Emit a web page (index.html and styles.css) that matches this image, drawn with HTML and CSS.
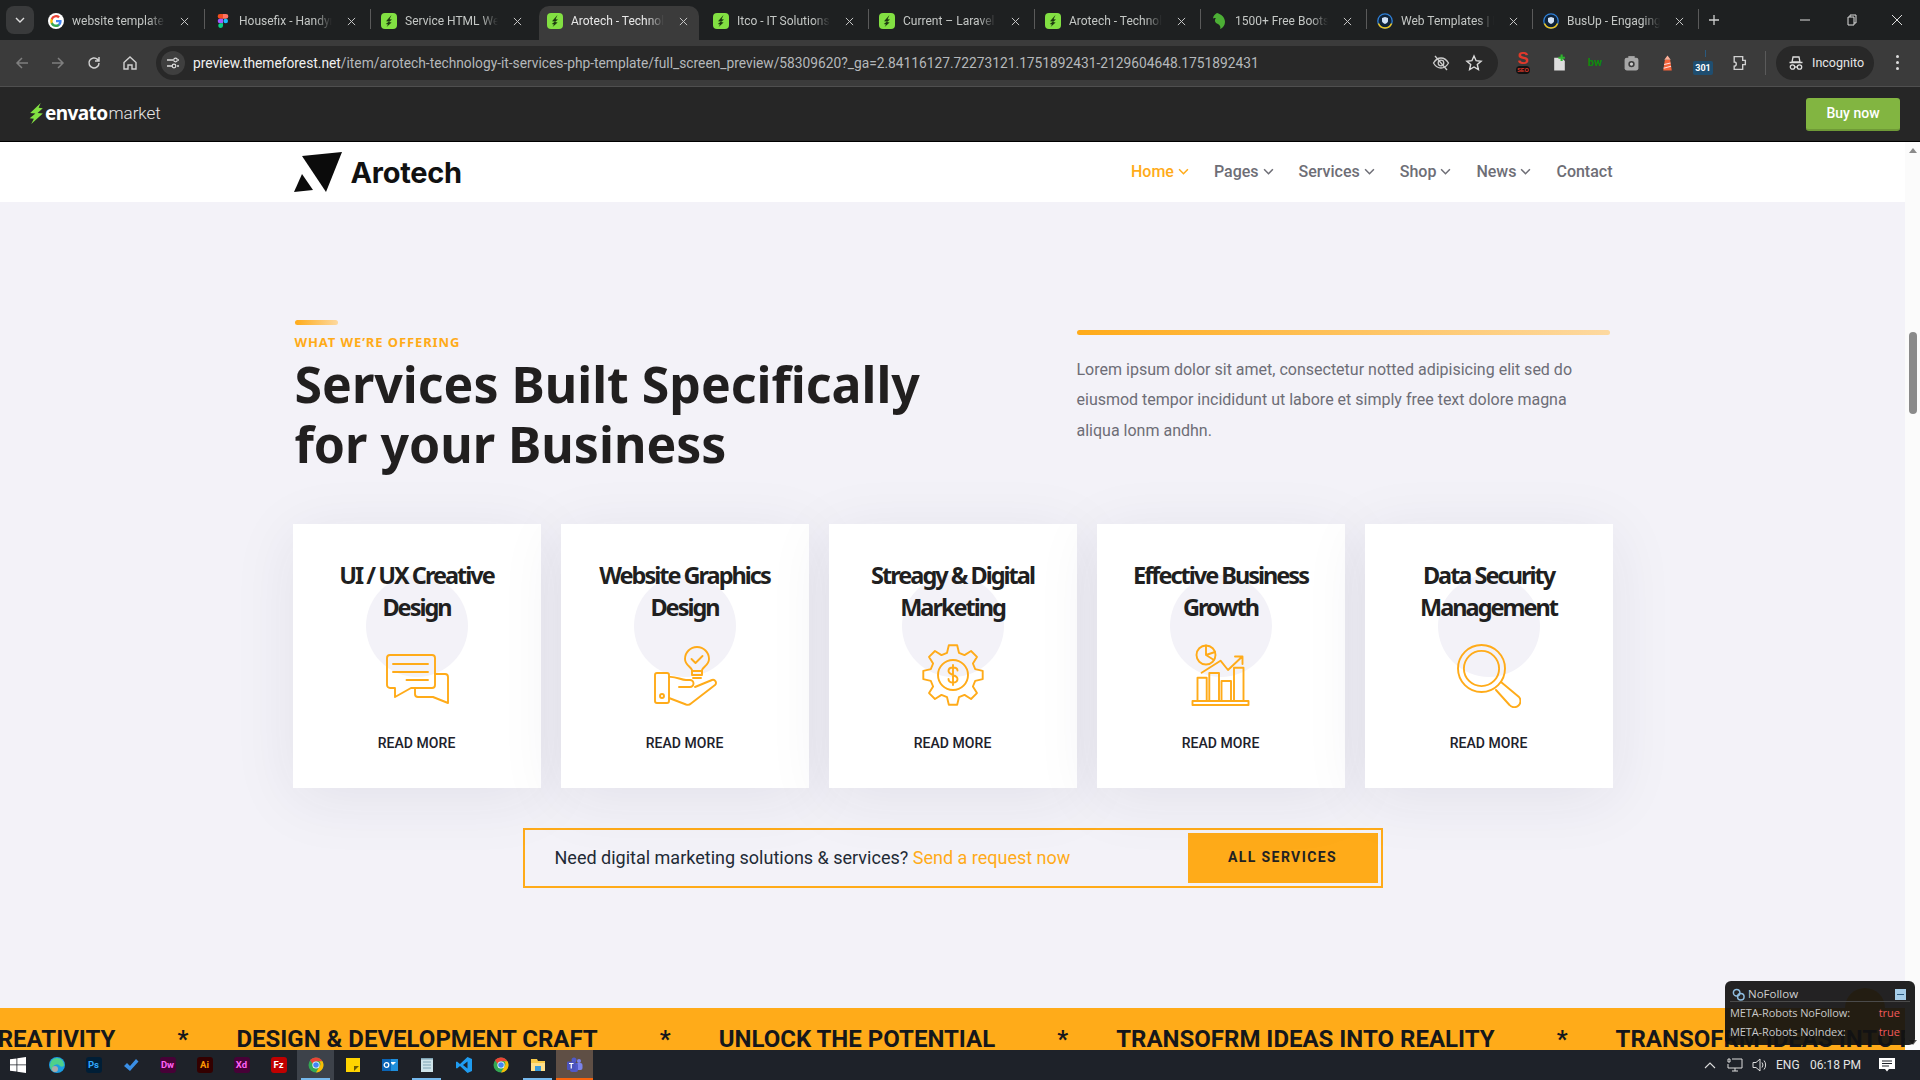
FILE: index.html
```html
<!DOCTYPE html>
<html lang="en">
<head>
<meta charset="utf-8">
<title>Arotech - Technology</title>
<link rel="stylesheet" href="styles.css">
</head>
<body>
<svg class="defs" width="0" height="0" aria-hidden="true">
  <symbol id="envato" viewBox="0 0 16 16"><rect width="16" height="16" rx="4" fill="#82e042"/><path d="M10.5 2 5 8.2l3 .3-3.2 2.6 2.2.3L5.6 14l5-4.6-2.6-.4 3-2.4-2.4-.3z" fill="#1d3a10"/></symbol>
  <symbol id="google" viewBox="0 0 16 16"><circle cx="8" cy="8" r="8" fill="#fff"/><path d="M13.6 8.2c0-.4 0-.8-.1-1.2H8v2.2h3.1a2.7 2.7 0 0 1-1.2 1.8v1.5h1.9c1.1-1 1.8-2.5 1.8-4.3z" fill="#4285f4"/><path d="M8 14c1.6 0 2.9-.5 3.8-1.5l-1.9-1.5c-.5.4-1.2.6-1.9.6-1.5 0-2.8-1-3.2-2.4h-2v1.5A5.9 5.9 0 0 0 8 14z" fill="#34a853"/><path d="M4.8 9.2a3.500 3.500 0 0 1 0-2.300V5.400h-2a6 6 0 0 0 0 5.300z" fill="#fbbc05"/><path d="M8 4.300c.9 0 1.600.3 2.200.9l1.700-1.700A5.900 5.900 0 0 0 2.800 5.400l2 1.500C5.200 5.400 6.500 4.300 8 4.300z" fill="#ea4335"/></symbol>
  <symbol id="figma" viewBox="0 0 16 16"><path d="M5 1h3v4.700H5a2.300 2.300 0 0 1 0-4.700z" fill="#f24e1e"/><path d="M8 1h3a2.300 2.300 0 0 1 0 4.700H8z" fill="#ff7262"/><path d="M5 5.700h3v4.600H5a2.300 2.300 0 0 1 0-4.600z" fill="#a259ff"/><circle cx="10.700" cy="8" r="2.300" fill="#1abcfe"/><path d="M5 10.300h3V13a2.400 2.400 0 1 1-3-2.700z" fill="#0acf83"/></symbol>
  <symbol id="leaf" viewBox="0 0 16 16"><path d="M6 0c4 1 8 4 8 9 0 3-2 6-5 7 1-2 0-4-2-5-3-1-4-4-2-6-1 0-2 0-3 .5C2 3 4 1 6 0z" fill="#4caf35"/></symbol>
  <symbol id="shield" viewBox="0 0 16 16"><circle cx="8" cy="8" r="7.200" fill="#0e2238" stroke="#2f7fd6" stroke-width="1.300"/><path d="M1.500 10.500a7 7 0 0 0 13 0" fill="none" stroke="#f0c419" stroke-width="1.500"/><path d="M8 4l3 1v3c0 2-3 3-3 3S5 10 5 8V5z" fill="#cfe0f5"/></symbol>
  <symbol id="x" viewBox="0 0 10 10"><path d="M1 1l8 8M9 1l-8 8" stroke="#c7c7c7" stroke-width="1.100" fill="none"/></symbol>
  <symbol id="chev" viewBox="0 0 10 6"><path d="M1 1l4 4 4-4" fill="none" stroke="currentColor" stroke-width="1.400"/></symbol>
  <symbol id="chrome" viewBox="0 0 16 16"><circle cx="8" cy="8" r="7.500" fill="#34a853"/><path d="M8 .5a7.500 7.500 0 0 1 6.500 3.800H8a3.700 3.700 0 0 0-3.500 2.500L2 3A7.500 7.500 0 0 1 8 .5z" fill="#ea4335"/><path d="M14.500 4.300A7.500 7.500 0 0 1 8 15.500l3.200-5.600a3.700 3.700 0 0 0 0-5.600z" fill="#fbbc05"/><circle cx="8" cy="8" r="3.600" fill="#fff"/><circle cx="8" cy="8" r="2.800" fill="#4285f4"/></symbol>
</svg>

<div class="tabstrip">
  <div class="tab-menu"><svg class="chev-s"><use href="#chev"/></svg></div>
  <div class="tabs">
    <div class="tab"><svg class="fav"><use href="#google"/></svg><span class="tab-title">website template -</span><svg class="tab-x"><use href="#x"/></svg></div>
    <div class="tab"><svg class="fav"><use href="#figma"/></svg><span class="tab-title">Housefix - Handym</span><svg class="tab-x"><use href="#x"/></svg></div>
    <div class="tab tab-nosep"><svg class="fav"><use href="#envato"/></svg><span class="tab-title">Service HTML Web</span><svg class="tab-x"><use href="#x"/></svg></div>
    <div class="tab tab-active tab-nosep"><svg class="fav"><use href="#envato"/></svg><span class="tab-title">Arotech - Technol</span><svg class="tab-x"><use href="#x"/></svg></div>
    <div class="tab"><svg class="fav"><use href="#envato"/></svg><span class="tab-title">Itco - IT Solutions</span><svg class="tab-x"><use href="#x"/></svg></div>
    <div class="tab"><svg class="fav"><use href="#envato"/></svg><span class="tab-title">Current – Laravel E</span><svg class="tab-x"><use href="#x"/></svg></div>
    <div class="tab"><svg class="fav"><use href="#envato"/></svg><span class="tab-title">Arotech - Technol</span><svg class="tab-x"><use href="#x"/></svg></div>
    <div class="tab"><svg class="fav"><use href="#leaf"/></svg><span class="tab-title">1500+ Free Bootst</span><svg class="tab-x"><use href="#x"/></svg></div>
    <div class="tab"><svg class="fav"><use href="#shield"/></svg><span class="tab-title">Web Templates | H</span><svg class="tab-x"><use href="#x"/></svg></div>
    <div class="tab"><svg class="fav"><use href="#shield"/></svg><span class="tab-title">BusUp - Engaging</span><svg class="tab-x"><use href="#x"/></svg></div>
  </div>
  <svg class="plus" viewBox="0 0 12 12"><path d="M6 1v10M1 6h10" stroke="#d0d0d0" stroke-width="1.300"/></svg>
  <div class="winctl">
    <svg viewBox="0 0 12 12"><path d="M1 6h10" stroke="#ddd"/></svg>
    <svg viewBox="0 0 12 12"><path d="M4 3V1h6v8H8M2 3h6v8H2z" fill="none" stroke="#ddd"/></svg>
    <svg viewBox="0 0 12 12"><path d="M1 1l10 10M11 1L1 11" stroke="#ddd" fill="none"/></svg>
  </div>
</div>

<div class="toolbar">
  <div class="tool"><svg viewBox="0 0 16 16"><path d="M14 8H3M8 3 3 8l5 5" fill="none" stroke="#7f7f7f" stroke-width="1.500"/></svg></div>
  <div class="tool"><svg viewBox="0 0 16 16"><path d="M2 8h11M8 3l5 5-5 5" fill="none" stroke="#7f7f7f" stroke-width="1.500"/></svg></div>
  <div class="tool"><svg viewBox="0 0 16 16"><path d="M13 8a5 5 0 1 1-1.500-3.600L13 6M13 2v4H9" fill="none" stroke="#d0d0d0" stroke-width="1.500"/></svg></div>
  <div class="tool"><svg viewBox="0 0 16 16"><path d="M2 7.500 8 2l6 5.500V14h-4v-4H6v4H2z" fill="none" stroke="#d0d0d0" stroke-width="1.400"/></svg></div>
  <div class="omnibox">
    <div class="site-btn"><svg viewBox="0 0 14 14"><path d="M1 4h6M11 10h2M1 10h5M12 4h1" stroke="#ddd" stroke-width="1.300"/><circle cx="9.500" cy="4" r="1.800" fill="none" stroke="#ddd" stroke-width="1.200"/><circle cx="8" cy="10" r="1.800" fill="none" stroke="#ddd" stroke-width="1.200"/></svg></div>
    <div class="url"><b>preview.themeforest.net</b>/item/arotech-technology-it-services-php-template/full_screen_preview/58309620?_ga=2.84116127.72273121.1751892431-2129604648.1751892431</div>
    <svg class="omni-ic" viewBox="0 0 18 18"><path d="M1.500 9S4.500 4 9 4s7.500 5 7.500 5-3 5-7.500 5-7.500-5-7.500-5z" fill="none" stroke="#ccc" stroke-width="1.300"/><circle cx="9" cy="9" r="2.800" fill="none" stroke="#ccc" stroke-width="1.300"/><path d="M3 2l12 14" stroke="#ccc" stroke-width="1.300"/></svg>
    <svg class="omni-ic star" viewBox="0 0 18 18"><path d="m9 2 2.100 4.700 5 .5-3.800 3.300 1.100 5L9 13l-4.400 2.500 1.100-5L1.900 7.200l5-.5z" fill="none" stroke="#ddd" stroke-width="1.400"/></svg>
  </div>
  <div class="ext ext-seo"><span class="seo-s">S</span><span class="seo-t">SEO</span></div>
  <div class="ext"><svg viewBox="0 0 16 16"><path d="M3 3h7l3 3v9H3z" fill="#ddd"/><path d="M10 0v6M7 3h6" stroke="#2fb52f" stroke-width="2"/></svg></div>
  <div class="ext ext-bw">bw</div>
  <div class="ext"><svg viewBox="0 0 16 16"><rect x="1.500" y="3" width="13" height="12" rx="2" fill="#a7a7a7"/><circle cx="8" cy="9" r="3" fill="#3b3b3b"/><circle cx="8" cy="9" r="1.500" fill="#ccc"/><rect x="5" y="1.500" width="6" height="2" fill="#a7a7a7"/></svg></div>
  <div class="ext"><svg viewBox="0 0 16 16"><path d="M5.500 5h5L12 15H4z" fill="#f4633a"/><path d="M4.800 9.500l6-1.500M4.300 13l7-2" stroke="#fdd" stroke-width="1"/><path d="M5 5l3-4 3 4z" fill="#ffb199"/></svg></div>
  <div class="ext ext-301"><span>301</span></div>
  <div class="ext"><svg viewBox="0 0 16 16"><path d="M3 2h8v3.500h2.500v4H11V14H3v-3a2 2 0 0 0 0-4z" fill="none" stroke="#d0d0d0" stroke-width="1.300"/></svg></div>
  <div class="tool-sep"></div>
  <div class="incognito">
    <svg viewBox="0 0 16 16"><path d="M5 2h6l1 5H4zM1.500 7.500h13" fill="none" stroke="#ddd" stroke-width="1.300"/><circle cx="4.500" cy="12" r="2.200" fill="none" stroke="#ddd" stroke-width="1.300"/><circle cx="11.500" cy="12" r="2.200" fill="none" stroke="#ddd" stroke-width="1.300"/><path d="M6.700 12h2.600" stroke="#ddd" stroke-width="1.300"/></svg>
    <span>Incognito</span>
  </div>
  <div class="dots"><i></i><i></i><i></i></div>
</div>

<div class="envato-bar">
  <div class="env-logo">
    <svg viewBox="0 0 14 20"><path d="M11 0 1 9.500l5 .4L.5 14.500l4 .4L2 20l11-10-5-.5 5-4.500-4-.4z" fill="#82e042"/></svg>
    <span class="env-b">envato</span><span class="env-l">market</span>
  </div>
  <div class="buy">Buy now</div>
</div>

<div class="viewport">
  <div class="page">
    <header class="site-head">
      <div class="site-head-in">
        <div class="brand">
          <svg viewBox="0 0 48 40"><path d="M8 4 48 0 32 40z" fill="#0b0b0b"/><path d="M8 22 19 38 0 40z" fill="#0b0b0b"/></svg>
          <span>Arotech</span>
        </div>
        <nav class="nav">
          <a class="nav-on">Home<svg class="nav-c"><use href="#chev"/></svg></a>
          <a>Pages<svg class="nav-c"><use href="#chev"/></svg></a>
          <a>Services<svg class="nav-c"><use href="#chev"/></svg></a>
          <a>Shop<svg class="nav-c"><use href="#chev"/></svg></a>
          <a>News<svg class="nav-c"><use href="#chev"/></svg></a>
          <a>Contact</a>
        </nav>
      </div>
    </header>

    <main class="services">
      <div class="sec-head">
        <div class="sec-left">
          <div class="rule rule-s"></div>
          <div class="eyebrow">WHAT WE’RE OFFERING</div>
          <h1>Services Built Specifically<br>for your Business</h1>
        </div>
        <div class="sec-right">
          <div class="rule"></div>
          <p>Lorem ipsum dolor sit amet, consectetur notted adipisicing elit sed do eiusmod tempor incididunt ut labore et simply free text dolore magna aliqua lonm andhn.</p>
        </div>
      </div>

      <div class="cards">
        <article class="card">
          <h3>UI / UX Creative Design</h3>
          <svg class="ic" viewBox="0 0 64 64"><path d="M5 11h42a3 3 0 0 1 3 3v27a3 3 0 0 1-3 3H26l-16 9v-9H5a3 3 0 0 1-3-3V14a3 3 0 0 1 3-3z"/><path d="M8 20h35M8 28h35M21.500 36H43"/><path d="M50 30h10a3 3 0 0 1 3 3v26l-15-6H33a3 3 0 0 1-3-3v-6"/></svg>
          <a class="more">READ MORE</a>
        </article>
        <article class="card">
          <h3>Website Graphics Design</h3>
          <svg class="ic" viewBox="0 0 64 64"><path d="M39 26c-1-3-7-5-7-11a12 12 0 0 1 24 0c0 6-6 8-7 11v5H39z"/><path d="M39 27h10M40 34h8M38.500 15l4 4 7-7"/><rect x="2" y="29" width="14" height="30" rx="2"/><circle cx="9" cy="52" r="2"/><path d="M16 33c6-1 12 3 17 3h4a3.500 3.500 0 0 1 0 7H26"/><path d="M16 54l17 6.500q3 1 5-1L62 41a3 3 0 0 0-3-5L42 43"/></svg>
          <a class="more">READ MORE</a>
        </article>
        <article class="card">
          <h3>Streagy &amp; Digital Marketing</h3>
          <svg class="ic" viewBox="0 0 64 64"><polygon points="26.050,8.800 27.820,1.300 36.180,1.300 37.950,8.800 43.500,11.100 50.050,7.040 55.960,12.950 51.900,19.500 54.200,25.050 61.700,26.820 61.700,35.180 54.200,36.950 51.900,42.500 55.960,49.050 50.050,54.960 43.500,50.900 37.950,53.200 36.180,60.700 27.820,60.700 26.050,53.200 20.500,50.900 13.950,54.960 8.040,49.050 12.100,42.500 9.800,36.950 2.300,35.180 2.300,26.820 9.800,25.050 12.100,19.500 8.040,12.950 13.950,7.040 20.500,11.100"/><circle cx="32" cy="31" r="15"/><path d="M36.500 26.500c0-2-2-3-4.500-3s-4.500 1.300-4.500 3.500 2 3 4.500 4 4.500 1.800 4.500 4-2 3.500-4.500 3.500-4.500-1-4.500-3.500M32 21v20"/></svg>
          <a class="more">READ MORE</a>
        </article>
        <article class="card">
          <h3>Effective Business Growth</h3>
          <svg class="ic" viewBox="0 0 64 64"><circle cx="17" cy="11" r="9.500"/><path d="M17 1.500V11l8 5M17 11l9-3"/><path d="M12.600 28.700l18.900-12 7.500 9.300 14-13.300M46 12.500h7.500V20"/><path d="M8.500 57V33.700h9.200V57M20.300 57V29H30v28M32.500 57V37H42v20M45 57V23.700h9.500V57"/><rect x="3.500" y="57" width="56" height="4"/></svg>
          <a class="more">READ MORE</a>
        </article>
        <article class="card">
          <h3>Data Security Management</h3>
          <svg class="ic" viewBox="0 0 64 64"><circle cx="24.500" cy="24.500" r="23.500"/><circle cx="24.500" cy="24.500" r="17.600"/><path d="M44 38l18 15a6 6 0 0 1-9.500 8L39 46"/></svg>
          <a class="more">READ MORE</a>
        </article>
      </div>

      <div class="cta">
        <p>Need digital marketing solutions &amp; services? <a>Send a request now</a></p>
        <div class="cta-btn">ALL SERVICES</div>
      </div>
    </main>

    <div class="ticker">
      <span class="t-first">CREATIVITY</span><i>*</i>
      <span>DESIGN &amp; DEVELOPMENT CRAFT</span><i>*</i>
      <span>UNLOCK THE POTENTIAL</span><i>*</i>
      <span>TRANSOFRM IDEAS INTO REALITY</span><i>*</i>
      <span>TRANSOFRM IDEAS INTO REALITY</span>
    </div>
    <div class="to-top"></div>
  </div>
  <div class="scrollbar">
    <div class="arrow-up"></div>
    <div class="thumb"></div>
    <div class="arrow-down"></div>
  </div>
</div>

<footer class="taskbar">
  <div class="task task-win"><svg viewBox="0 0 16 16"><path d="M0 2.300 6.500 1.400v6.100H0zM7.300 1.300 16 0v7.500H7.300zM0 8.300h6.500v6.300L0 13.700zM7.300 8.300H16V16l-8.700-1.300z" fill="#fff"/></svg></div>
  <div class="task"><svg viewBox="0 0 16 16"><circle cx="8" cy="8" r="8" fill="#1b9de2"/><path d="M1 8a7 7 0 0 1 14 0c0 2-3 2-4 1a4 4 0 0 0-7 1c-.5 1 0 4 2 5a7 7 0 0 1-5-7z" fill="#4fd08a"/><circle cx="6" cy="12" r="3" fill="#aaa"/></svg></div>
  <div class="task"><span class="app app-ps">Ps</span></div>
  <div class="task"><svg viewBox="0 0 16 16"><path d="M1 9l3-3 3 3 6-7 2.500 2.500L7 14z" fill="#3a8fe6"/></svg></div>
  <div class="task"><span class="app app-dw">Dw</span></div>
  <div class="task"><span class="app app-ai">Ai</span></div>
  <div class="task"><span class="app app-xd">Xd</span></div>
  <div class="task"><span class="app app-fz">Fz</span></div>
  <div class="task task-open task-sel"><svg><use href="#chrome"/></svg></div>
  <div class="task"><svg viewBox="0 0 16 16"><rect x="1" y="1" width="14" height="14" fill="#ffd400"/><path d="M9 14l5-5H9z" fill="#6b5a00"/></svg></div>
  <div class="task"><svg viewBox="0 0 16 16"><rect x="5" y="2" width="11" height="12" fill="#1f8fdc"/><path d="M8 5h6l-3 3z" fill="#fff"/><rect y="2" width="9" height="12" fill="#0a64b5"/><circle cx="4.500" cy="8" r="2.300" fill="none" stroke="#fff" stroke-width="1.300"/></svg></div>
  <div class="task task-open"><svg viewBox="0 0 16 16"><path d="M2 1h12v14H2z" fill="#cfe4ea"/><path d="M4 5h8M4 8h8M4 11h8" stroke="#7fa4b4"/><path d="M2 1h12v1.500H2z" fill="#7fa4b4"/></svg></div>
  <div class="task"><svg viewBox="0 0 16 16"><path d="M11.500 0 16 2v12l-4.500 2L4 9l-3 2.500L0 11V5l1-.5L4 7z" fill="#1f9cf0"/><path d="M11.500 4.500 7 8l4.500 3.500z" fill="#1e2229"/></svg></div>
  <div class="task"><svg><use href="#chrome"/></svg></div>
  <div class="task task-open"><svg viewBox="0 0 16 16"><path d="M1 2h6l1 2h7v10H1z" fill="#f7c948"/><rect x="1" y="6" width="14" height="8" fill="#ffe08a"/><rect x="5" y="9" width="6" height="5" fill="#3a9ad9"/></svg></div>
  <div class="task task-teams"><svg viewBox="0 0 16 16"><circle cx="12" cy="4" r="2" fill="#7b83eb"/><rect x="9" y="6" width="6.500" height="7" rx="2" fill="#7b83eb"/><circle cx="7" cy="3" r="2.500" fill="#5059c9"/><rect x="3" y="6" width="8" height="9" rx="2" fill="#5059c9"/><rect x="0" y="4.500" width="8.500" height="8.500" rx="1" fill="#4b53bc"/><path d="M2 6.500h4.500M4.250 6.500v5" stroke="#fff" stroke-width="1.200"/></svg></div>
  <div class="tray">
    <svg class="tray-c" viewBox="0 0 12 8"><path d="M1 7l5-5 5 5" fill="none" stroke="#ddd" stroke-width="1.100"/></svg>
    <svg class="tray-net" viewBox="0 0 16 16"><path d="M1 2h2v3H1zM5 2h10v9H1V7" fill="none" stroke="#ddd"/><path d="M8 11v3M5 14h6" stroke="#ddd"/></svg>
    <svg class="tray-vol" viewBox="0 0 16 16"><path d="M1 5.500h3L8 2v12L4 10.500H1z" fill="none" stroke="#ddd"/><path d="M10 5.500a4 4 0 0 1 0 5M12 3.500a7 7 0 0 1 0 9" fill="none" stroke="#ddd"/></svg>
    <span class="tray-eng">ENG</span>
    <span class="tray-time">06:18 PM</span>
    <svg class="tray-note" viewBox="0 0 16 16"><path d="M0 1h16v11H10l-2 2.500L6 12H0z" fill="#fff"/><path d="M3 4h10M3 6.500h10M3 9h7" stroke="#1e2229"/></svg>
  </div>
</footer>

<aside class="nofollow">
  <div class="nf-title">
    <svg viewBox="0 0 14 14"><circle cx="5" cy="5" r="3.500" fill="none" stroke="#8fbde0" stroke-width="1.600"/><circle cx="9.500" cy="9.500" r="3.500" fill="none" stroke="#8fbde0" stroke-width="1.600"/></svg>
    <span>NoFollow</span>
    <div class="nf-min"></div>
  </div>
  <div class="nf-row"><span>META-Robots NoFollow:</span><b>true</b></div>
  <div class="nf-row"><span>META-Robots NoIndex:</span><b>true</b></div>
</aside>
</body>
</html>
```

FILE: styles.css
```css
* { box-sizing: border-box; }
html, body { margin: 0; height: 100%; }
body {
  width: 1920px; height: 1080px; overflow: hidden;
  display: flex; flex-direction: column;
  font-family: Roboto, "Liberation Sans", sans-serif;
  background: #1f2122;
  position: relative;
}
.defs { position: absolute; }

/* tab strip */
.tabstrip { height: 40px; flex: none; display: flex; align-items: stretch; background: #1e2021; padding-left: 6px; }
.tab-menu { width: 28px; height: 28px; margin-top: 6px; border-radius: 8px; background: #393a3b; color: #ddd; display: flex; align-items: center; justify-content: center; }
.chev-s { width: 10px; height: 6px; }
.tabs { display: flex; margin-left: 7px; }
.tab { width: 166px; height: 34px; margin-top: 6px; padding: 0 0 4px 8px; display: flex; align-items: center; position: relative; color: #c4c7c5; font-size: 12px; }
.tab:first-child { padding-left: 7px; }
.tab::after { content: ""; position: absolute; left: 163px; top: 3px; width: 1px; height: 20px; background: #5a5a5a; }
.tab-nosep::after { display: none; }
.tab-active { background: #3b3b3b; color: #e8e8e8; width: 160px; margin-right: 6px; border-radius: 10px 10px 0 0; }
.fav { width: 16px; height: 16px; flex: none; }
.tab-title { width: 93px; margin-left: 8px; white-space: nowrap; overflow: hidden; -webkit-mask-image: linear-gradient(90deg, #000 82%, transparent); mask-image: linear-gradient(90deg, #000 82%, transparent); }
.tab-x { width: 9px; height: 9px; margin-left: 15px; flex: none; }
.plus { width: 12px; height: 12px; margin: 14px 0 0 7px; flex: none; }
.winctl { margin-left: auto; display: flex; gap: 33px; padding: 14px 17px 0 0; }
.winctl svg { width: 12px; height: 12px; }
.winctl svg:first-child { margin-right: 2px; }

/* toolbar */
.toolbar { height: 47px; flex: none; background: #3b3b3b; border-bottom: 1px solid #4f4f4f; display: flex; align-items: center; padding: 0 0 1px 4px; }
.tool { width: 36px; display: flex; justify-content: center; }
.tool svg { width: 16px; height: 16px; }
.omnibox { width: 1342px; height: 34px; margin-left: 8px; border-radius: 17px; background: #282828; display: flex; align-items: center; padding-left: 5px; }
.site-btn { width: 24px; height: 24px; border-radius: 50%; background: #3f3f3f; display: flex; align-items: center; justify-content: center; }
.site-btn svg { width: 14px; height: 14px; }
.url { margin-left: 8px; font-size: 13.770px; color: #b5b8bb; white-space: nowrap; width: 1232px; font-family: Roboto, sans-serif; }
.url b { font-weight: 400; color: #f1f1f1; }
.omni-ic { width: 18px; height: 18px; flex: none; margin-left: 7px; }
.omni-ic.star { margin-left: 15px; }
.ext { width: 36px; height: 24px; display: flex; align-items: center; justify-content: center; position: relative; }
.ext svg { width: 17px; height: 18px; }
.omnibox + .ext { margin-left: 7px; }
.ext-seo { flex-direction: column; }
.seo-s { color: #e0392b; font: 700 17px/14px "Liberation Sans", sans-serif; }
.seo-t { background: #111; color: #e0392b; font: 700 5.500px/8px "Liberation Sans", sans-serif; padding: 0 1px; border-radius: 4px; }
.ext-bw { color: #0d8c0d; font: 700 11px Roboto, sans-serif; }
.ext-301::before { content: ""; position: absolute; left: 20px; top: -1px; width: 1px; height: 7px; background: #2a5a7f; }
.ext-301 span { background: #1f4e70; color: #fff; font: 700 9px/14px Roboto, sans-serif; padding: 0 2px; margin-top: 10px; border-radius: 2px; }
.tool-sep { width: 1px; height: 24px; background: #5a5a5a; margin-left: 8px; }
.incognito { width: 98px; height: 34px; margin-left: 10px; border-radius: 17px; background: #282828; display: flex; align-items: center; padding-left: 12px; color: #e6e6e6; font-size: 12.500px; gap: 8px; }
.incognito svg { width: 16px; height: 16px; }
.dots { width: 46px; display: flex; flex-direction: column; align-items: center; gap: 3px; }
.dots i { width: 3px; height: 3px; border-radius: 50%; background: #ddd; }

/* envato bar */
.envato-bar { height: 55px; flex: none; background: #262626; border-bottom: 1px solid #000; display: flex; align-items: center; justify-content: space-between; padding: 0 20px 0 29px; }
.env-logo { display: flex; align-items: center; margin-bottom: 2px; }
.env-logo svg { width: 15px; height: 21px; margin-right: 1px; }
.env-b { font: 700 19px "Noto Sans", sans-serif; color: #fff; letter-spacing: -.6px; }
.env-l { font: 300 17px Roboto, sans-serif; color: #e8e8e8; margin-left: 1px; }
.buy { width: 94px; height: 33px; background: #82b541; border-bottom: 2px solid #6f9a37; border-radius: 3px; color: #fff; font: 500 14px/31px Roboto, sans-serif; text-align: center; }

/* page */
.viewport { flex: 1; min-height: 0; display: flex; }
.page { flex: 1; min-width: 0; background: #f3f2f8; overflow: hidden; display: flex; flex-direction: column; position: relative; }
.site-head { height: 60px; flex: none; background: #fff; }
.site-head-in { width: 1320px; height: 100%; margin: 0 auto; display: flex; align-items: center; justify-content: space-between; }
.brand { display: flex; align-items: center; gap: 9px; margin-left: 1px; }
.brand svg { width: 48px; height: 40px; }
.brand span { font: 700 29px Inter, sans-serif; color: #111; letter-spacing: -.3px; }
.nav { display: flex; gap: 25px; font-size: 16px; font-weight: 500; color: #6e6e76; padding-bottom: 2px; }
.nav a { display: flex; align-items: center; }
.nav-on { color: #ffab19; }
.nav-c { width: 11px; height: 7px; margin-left: 4px; }

.services { width: 1320px; margin: 0 auto; flex: none; padding-top: 118px; }
.sec-head { display: flex; justify-content: space-between; padding: 0 3px 0 2px; height: 204px; }
.sec-left { width: 700px; }
.sec-right { width: 533px; padding-top: 10px; }
.rule { height: 5px; border-radius: 3px; background: linear-gradient(90deg, #ffab19, #fdd9a0); }
.rule-s { width: 43px; }
.eyebrow { margin-top: 9px; font: 700 13px/16px "Noto Sans", sans-serif; letter-spacing: .9px; color: #ffab19; }
h1 { margin: 4px 0 0; font: 700 50px/60px "Noto Sans", sans-serif; color: #211f1f; letter-spacing: 0; }
.sec-right p { margin: 20px 0 0; font-size: 16px; line-height: 30.400px; color: #6d6d76; }

.cards { display: flex; gap: 20px; }
.card { flex: 1; height: 264px; background: #fff; box-shadow: 0 10px 60px rgba(40, 40, 80, .08); padding: 35px 0 0; display: flex; flex-direction: column; align-items: center; position: relative; }
.card::before { content: ""; position: absolute; left: 73px; top: 51px; width: 102px; height: 102px; border-radius: 50%; background: #f3f2f8; }
.card h3 { position: relative; width: 220px; margin: 0; text-align: center; font: 700 23.500px/32px "Noto Sans", sans-serif; letter-spacing: -2px; color: #211f1f; }
.ic { position: relative; width: 64px; height: 64px; margin-top: 21px; fill: none; stroke: #ffab19; stroke-width: 1.900; stroke-linejoin: round; stroke-linecap: round; }
.more { margin-top: 25px; font-size: 14px; line-height: 20px; font-weight: 500; color: #21212b; letter-spacing: .05px; }

.cta { width: 860px; height: 60px; margin: 40px 0 0 230px; border: 2px solid #ffab19; display: flex; align-items: center; justify-content: space-between; padding: 0 3px 0 30px; }
.cta p { margin: 0 0 2px; font-size: 18px; color: #222a35; }
.cta a { color: #ffab19; }
.cta-btn { width: 190px; height: 50px; background: #ffab19; color: #222; text-align: center; font: 700 14px/49px Roboto, sans-serif; letter-spacing: 1.400px; }

.ticker { margin-top: 120px; flex: none; height: 60px; background: #ffab19; display: flex; align-items: flex-start; padding-top: 16px; color: #15171c; font: 700 24px/30px Roboto, sans-serif; white-space: nowrap; }
.ticker span { flex: none; }
.ticker .t-first { margin-left: -18px; }
.ticker i { flex: none; width: 121px; padding-left: 14px; text-align: center; font-style: normal; }
.to-top { position: absolute; left: 1845px; top: 846px; width: 40px; height: 40px; border-radius: 50%; background: #ffab19; }

.scrollbar { width: 15px; flex: none; background: #fbfbfb; display: flex; flex-direction: column; align-items: center; padding: 6px 0 5px; }
.arrow-up { width: 0; height: 0; border: 4px solid transparent; border-top: 0; border-bottom: 5px solid #8a8a8a; }
.thumb { width: 8px; height: 82px; margin-top: 179px; border-radius: 4px; background: #8a8a8a; }
.arrow-down { margin-top: auto; width: 0; height: 0; border: 4px solid transparent; border-bottom: 0; border-top: 5px solid #555; }

/* taskbar */
.taskbar { height: 30px; flex: none; background: #1e2229; display: flex; align-items: stretch; color: #e4e4e4; }
.task { width: 37px; display: flex; align-items: center; justify-content: center; position: relative; }
.task svg { width: 16px; height: 16px; }
.task-win { width: 38px; padding-right: 2px; }
.task-open::after { content: ""; position: absolute; left: 4px; right: 4px; bottom: 0; height: 2px; background: #76b9ed; }
.task-sel { background: #3d424a; }
.task-teams { background: #5f4f45; }
.task-teams::after { content: ""; position: absolute; left: 0; right: 0; bottom: 0; height: 2px; background: #f7630c; }
.app { width: 16px; height: 16px; border-radius: 3px; font: 700 9.500px/16px Roboto, sans-serif; text-align: center; }
.app-ps { background: #001e36; color: #31a8ff; }
.app-dw { background: #470137; color: #ff61f6; }
.app-ai { background: #330000; color: #ff9a00; }
.app-xd { background: #470137; color: #ff61f6; }
.app-fz { background: #bf0000; color: #fff; }
.tray { margin-left: auto; display: flex; align-items: center; font-size: 12px; padding-right: 25px; }
.tray-c { width: 12px; height: 8px; }
.tray-net { width: 16px; height: 16px; margin-left: 11px; }
.tray-vol { width: 16px; height: 16px; margin-left: 9px; }
.tray-eng { margin-left: 8.500px; }
.tray-time { margin-left: 10.500px; }
.tray-note { width: 16px; height: 16px; margin-left: 18px; }

/* nofollow popup */
.nofollow { position: absolute; left: 1725px; top: 981px; width: 190px; height: 64px; background: rgba(18, 18, 18, .93); border-radius: 6px; padding: 6px 5px 0; font: 11px/18.500px "Open Sans", sans-serif; color: #c9c9c9; }
.nf-title { display: flex; align-items: center; height: 14px; padding-left: 2px; gap: 3px; position: relative; font-size: 11.500px; color: #d0d0d0; margin-bottom: 3px; }
.nf-title::after { content: ""; position: absolute; left: 0; right: 0; bottom: -1px; height: 1px; background: #4a4a4a; }
.nf-title svg { width: 13px; height: 13px; }
.nf-min { margin-left: auto; margin-right: 4px; width: 11px; height: 11px; background: #a6cde8; position: relative; }
.nf-min::after { content: ""; position: absolute; left: 2px; right: 2px; top: 5px; height: 1px; background: #2a5a7f; }
.nf-row { display: flex; justify-content: space-between; padding-right: 10px; white-space: nowrap; }
.nf-row span { letter-spacing: -.1px; }
.nf-row b { font-weight: 400; color: #f25a5a; }
```
